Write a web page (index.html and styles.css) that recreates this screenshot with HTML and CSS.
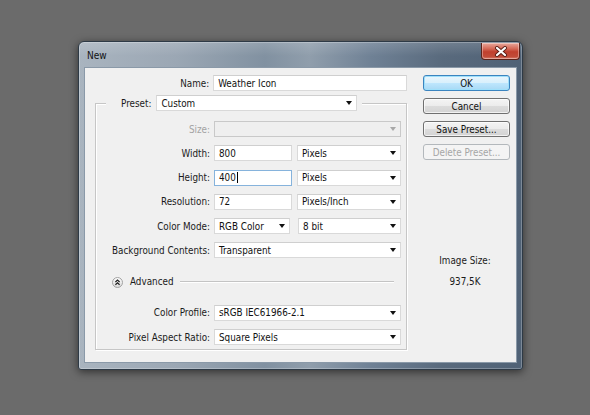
FILE: index.html
```html
<!DOCTYPE html>
<html>
<head>
<meta charset="utf-8">
<title>New</title>
<link rel="stylesheet" href="styles.css">
</head>
<body>
<div class="window">
  <div class="titlebar">
    <span class="title">New</span>
    <button class="close" aria-label="Close">
      <svg width="14" height="11" viewBox="0 0 14 11"><path d="M3 2 L11 9 M11 2 L3 9" stroke="#5a1d15" stroke-width="4" stroke-linecap="round" fill="none"/><path d="M3 2 L11 9 M11 2 L3 9" stroke="#ffffff" stroke-width="2.2" stroke-linecap="round" fill="none"/></svg>
    </button>
  </div>
  <div class="client">
    <div class="form">
      <div class="row name-row">
        <span class="lbl lbl-name">Name:</span>
        <div class="field w-name">Weather Icon</div>
      </div>
      <fieldset class="group">
        <legend class="legend">
          <span class="legend-lbl">Preset:</span>
          <div class="field select w-preset">Custom</div>
        </legend>
        <div class="rows">
          <div class="row"><span class="lbl disabled">Size:</span><div class="field select is-disabled w-full"></div></div>
          <div class="row"><span class="lbl">Width:</span><div class="field w-num">800</div><div class="field select w-unit">Pixels</div></div>
          <div class="row"><span class="lbl">Height:</span><div class="field w-num focused">400<span class="caret"></span></div><div class="field select w-unit">Pixels</div></div>
          <div class="row"><span class="lbl">Resolution:</span><div class="field w-num">72</div><div class="field select w-unit">Pixels/Inch</div></div>
          <div class="row"><span class="lbl">Color Mode:</span><div class="field select w-mode">RGB Color</div><div class="field select w-bits">8 bit</div></div>
          <div class="row"><span class="lbl">Background Contents:</span><div class="field select w-full">Transparent</div></div>
        </div>
        <div class="advanced">
          <svg class="adv-icon" width="11" height="11" viewBox="0 0 11 11">
            <defs><linearGradient id="ag" x1="0" y1="0" x2="0" y2="1"><stop offset="0" stop-color="#ffffff"/><stop offset="1" stop-color="#d8d8d8"/></linearGradient></defs>
            <circle cx="5.5" cy="5.5" r="5" fill="url(#ag)" stroke="#a2a2a2" stroke-width="1"/>
            <polyline points="3.4,5 5.5,3 7.6,5" fill="none" stroke="#1f1f1f" stroke-width="1.2"/>
            <polyline points="3.4,7.8 5.5,5.8 7.6,7.8" fill="none" stroke="#1f1f1f" stroke-width="1.2"/>
          </svg>
          <span class="adv-text">Advanced</span>
          <span class="adv-line"></span>
        </div>
        <div class="rows">
          <div class="row"><span class="lbl">Color Profile:</span><div class="field select w-full">sRGB IEC61966-2.1</div></div>
          <div class="row"><span class="lbl">Pixel Aspect Ratio:</span><div class="field select w-full">Square Pixels</div></div>
        </div>
      </fieldset>
    </div>
    <div class="side">
      <button class="btn default">OK</button>
      <button class="btn">Cancel</button>
      <button class="btn">Save Preset...</button>
      <button class="btn" disabled>Delete Preset...</button>
      <div class="imgsize">
        <div>Image Size:</div>
        <div>937,5K</div>
      </div>
    </div>
  </div>
</div>
</body>
</html>
```
FILE: styles.css
```css
html, body {
  margin: 0;
  padding: 0;
}
body {
  width: 590px;
  height: 415px;
  background: #6b6b6b;
  overflow: hidden;
  font-family: "DejaVu Sans Condensed", "DejaVu Sans", sans-serif;
  font-stretch: condensed;
  font-size: 9.8px;
  color: #1b1b1b;
}
.window {
  box-sizing: border-box;
  margin: 41px 0 0 78px;
  width: 445px;
  height: 329px;
  border: 1px solid #2e3a46;
  border-radius: 6px 6px 3px 3px;
  background:
    linear-gradient(180deg, rgba(255,255,255,0.15) 0px, rgba(255,255,255,0) 14px),
    linear-gradient(90deg, #a9b4bf 0%, #9ba7b4 22%, #8191a1 42%, #909eac 52%, #6f8195 66%, #596a7d 82%, #506276 100%);
  box-shadow: 0 2px 8px rgba(0,0,0,0.55), inset 0 0 0 1px rgba(255,255,255,0.25);
  display: flex;
  flex-direction: column;
}
.titlebar {
  height: 25px;
  display: flex;
  justify-content: space-between;
  align-items: flex-start;
  padding: 0 2px 0 8px;
}
.title {
  align-self: center;
  color: #111;
  font-size: 10px;
  margin-top: 1px;
}
.close {
  margin-top: 1px;
  width: 39px;
  height: 17px;
  padding: 0;
  border: 1px solid #5b2219;
  border-top: none;
  border-radius: 0 0 4px 4px;
  background: linear-gradient(180deg, #e9a89c 0%, #d56a58 35%, #c0402e 55%, #c14b38 85%, #d9806f 100%);
  box-shadow: inset 0 0 0 1px rgba(255,255,255,0.35);
  display: flex;
  align-items: center;
  justify-content: center;
}
.client {
  box-sizing: border-box;
  flex: 1;
  margin: 0 5px 6px 5px;
  background: #f0f0f0;
  border: 1px solid #8a99a8;
  display: flex;
}
.form {
  width: 322px;
  display: flex;
  flex-direction: column;
}
.row {
  display: flex;
  align-items: center;
  height: 16px;
}
.lbl {
  box-sizing: border-box;
  width: 117px;
  padding-right: 4px;
  text-align: right;
  white-space: nowrap;
}
.lbl-name {
  width: 129px;
}
.name-row {
  margin-top: 7px;
}
.disabled {
  color: #a3a3a3;
}
.field {
  box-sizing: border-box;
  height: 16px;
  background: #fff;
  border: 1px solid #d9d9d9;
  border-top-color: #cfcfcf;
  padding: 0 4px;
  display: flex;
  align-items: center;
  color: #111;
  white-space: nowrap;
}
.select::after {
  content: "";
  margin-left: auto;
  border-left: 3px solid transparent;
  border-right: 3px solid transparent;
  border-top: 4px solid #111;
}
.is-disabled {
  background: #efefef;
  border-color: #c9c9c9;
}
.is-disabled::after {
  border-top-color: #a8a8a8;
}
.focused {
  border-color: #86b3dc;
}
.caret {
  display: inline-block;
  width: 1px;
  height: 11px;
  background: #000;
  margin-left: 1px;
}
.w-name { width: 195px; }
.w-preset { width: 201px; }
.w-full { width: 187px; }
.w-num { width: 78px; }
.w-unit { width: 104px; margin-left: 5px; }
.w-mode { width: 76px; }
.w-bits { width: 103px; margin-left: 8px; }

.group {
  box-sizing: border-box;
  margin: 4px 0 0 10px;
  width: 312px;
  min-inline-size: 0;
  padding: 10px 0 4px 0;
  border: 1px solid #c6c6c6;
  box-shadow: inset 1px 1px 0 #ffffff, 1px 1px 0 #ffffff;
}
.legend {
  display: flex;
  align-items: center;
  height: 16px;
  margin-left: 10px;
  padding: 0 5px 0 15px;
  background: #f0f0f0;
}
.legend-lbl {
  margin-right: 5px;
}
.rows {
  display: flex;
  flex-direction: column;
  gap: 8.3px;
  padding-left: 1px;
}
.advanced {
  display: flex;
  align-items: center;
  height: 16px;
  margin: 15px 12px 15.5px 16px;
}
.adv-icon {
  margin-top: 3px;
  flex: none;
}
.adv-text {
  margin-left: 7px;
}
.adv-line {
  flex: 1;
  height: 1px;
  background: #c4c4c4;
  box-shadow: 0 1px 0 #fff;
  margin-left: 6px;
}
.side {
  display: flex;
  flex-direction: column;
  padding-top: 7px;
  margin-left: 16px;
  width: 87px;
}
.btn {
  box-sizing: border-box;
  width: 87px;
  height: 16px;
  margin-bottom: 7px;
  padding: 0;
  font: inherit;
  color: #111;
  border: 1px solid #707070;
  border-radius: 3px;
  background: linear-gradient(180deg, #f4f4f4 0%, #ececec 48%, #dcdcdc 52%, #d3d3d3 100%);
  box-shadow: inset 0 0 0 1px rgba(255,255,255,0.7);
}
.btn.default {
  border-color: #3b84bf;
  background: linear-gradient(180deg, #eaf6fd 0%, #d9f0fc 48%, #bee6fd 52%, #a7d9f5 100%);
  box-shadow: inset 0 0 0 1px #9fe0fb;
}
.btn:disabled {
  color: #a6a6a6;
  border-color: #b3b8bc;
  background: #f4f4f4;
  box-shadow: none;
}
.imgsize {
  margin-top: 88px;
  display: flex;
  flex-direction: column;
  align-items: center;
  gap: 9px;
  line-height: 12px;
  padding-right: 3px;
}
```
